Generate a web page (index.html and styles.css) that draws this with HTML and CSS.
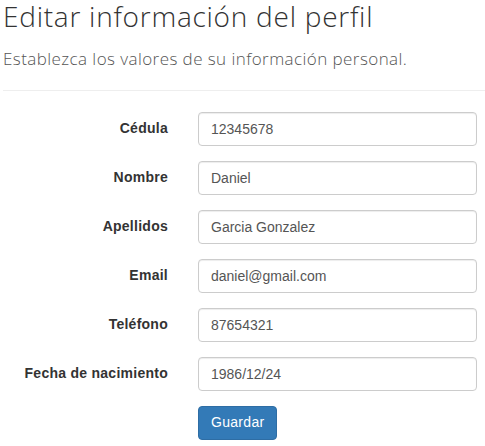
FILE: index.html
```html
<!DOCTYPE html>
<html lang="es">
<head>
<meta charset="utf-8">
<title>Editar información del perfil</title>
<link rel="stylesheet" href="styles.css">
</head>
<body>
<div class="page">
  <h1 class="title">Editar información del perfil</h1>
  <p class="lead">Establezca los valores de su información personal.</p>
  <hr class="divider">
  <form class="form">
    <label class="label" for="cedula">Cédula</label>
    <input class="control" id="cedula" type="text" value="12345678">
    <label class="label" for="nombre">Nombre</label>
    <input class="control" id="nombre" type="text" value="Daniel">
    <label class="label" for="apellidos">Apellidos</label>
    <input class="control" id="apellidos" type="text" value="Garcia Gonzalez">
    <label class="label" for="email">Email</label>
    <input class="control" id="email" type="text" value="daniel@gmail.com">
    <label class="label" for="telefono">Teléfono</label>
    <input class="control" id="telefono" type="text" value="87654321">
    <label class="label" for="fecha">Fecha de nacimiento</label>
    <input class="control" id="fecha" type="text" value="1986/12/24">
    <div class="actions">
      <button class="btn" type="button">Guardar</button>
    </div>
  </form>
</div>
</body>
</html>
```

FILE: styles.css
```css
* { box-sizing: border-box; }
html, body { margin: 0; padding: 0; background: #fff; }
body {
  font-family: "Liberation Sans", Arial, sans-serif;
  font-size: 14px;
  line-height: 1.42857;
  color: #333;
}
.page { padding: 0 0 0 3px; }
.title {
  margin: 0;
  padding-top: 1px;
  font-family: "Open Sans", sans-serif;
  font-weight: 300;
  font-size: 28px;
  letter-spacing: 0.75px;
  line-height: 30px;
  color: #333;
}
.lead {
  margin: 16px 0 0;
  font-family: "Open Sans", sans-serif;
  font-weight: 300;
  font-size: 17px;
  letter-spacing: 0.43px;
  line-height: 24px;
  color: #555;
}
.divider {
  margin: 19px 0 21px;
  border: 0;
  border-top: 1px solid #eee;
  height: 0;
}
.form {
  display: grid;
  grid-template-columns: 165px 279px;
  column-gap: 30px;
  row-gap: 15px;
}
.label {
  font-weight: bold;
  text-align: right;
  padding-top: 7px;
  letter-spacing: 0.26px;
  color: #333;
}
.control {
  display: block;
  width: 100%;
  height: 34px;
  padding: 6px 12px;
  font-family: "Liberation Sans", Arial, sans-serif;
  font-size: 14px;
  line-height: 1.42857;
  color: #555;
  background: #fff;
  border: 1px solid #ccc;
  border-radius: 4px;
  box-shadow: inset 0 1px 1px rgba(0,0,0,.075);
}
.actions { grid-column: 2; }
.btn {
  display: inline-block;
  height: 34px;
  padding: 6px 12px;
  font-family: "Liberation Sans", Arial, sans-serif;
  font-size: 14px;
  letter-spacing: 0.3px;
  line-height: 1.42857;
  color: #fff;
  background: #337ab7;
  border: 1px solid #2e6da4;
  border-radius: 4px;
}
```
